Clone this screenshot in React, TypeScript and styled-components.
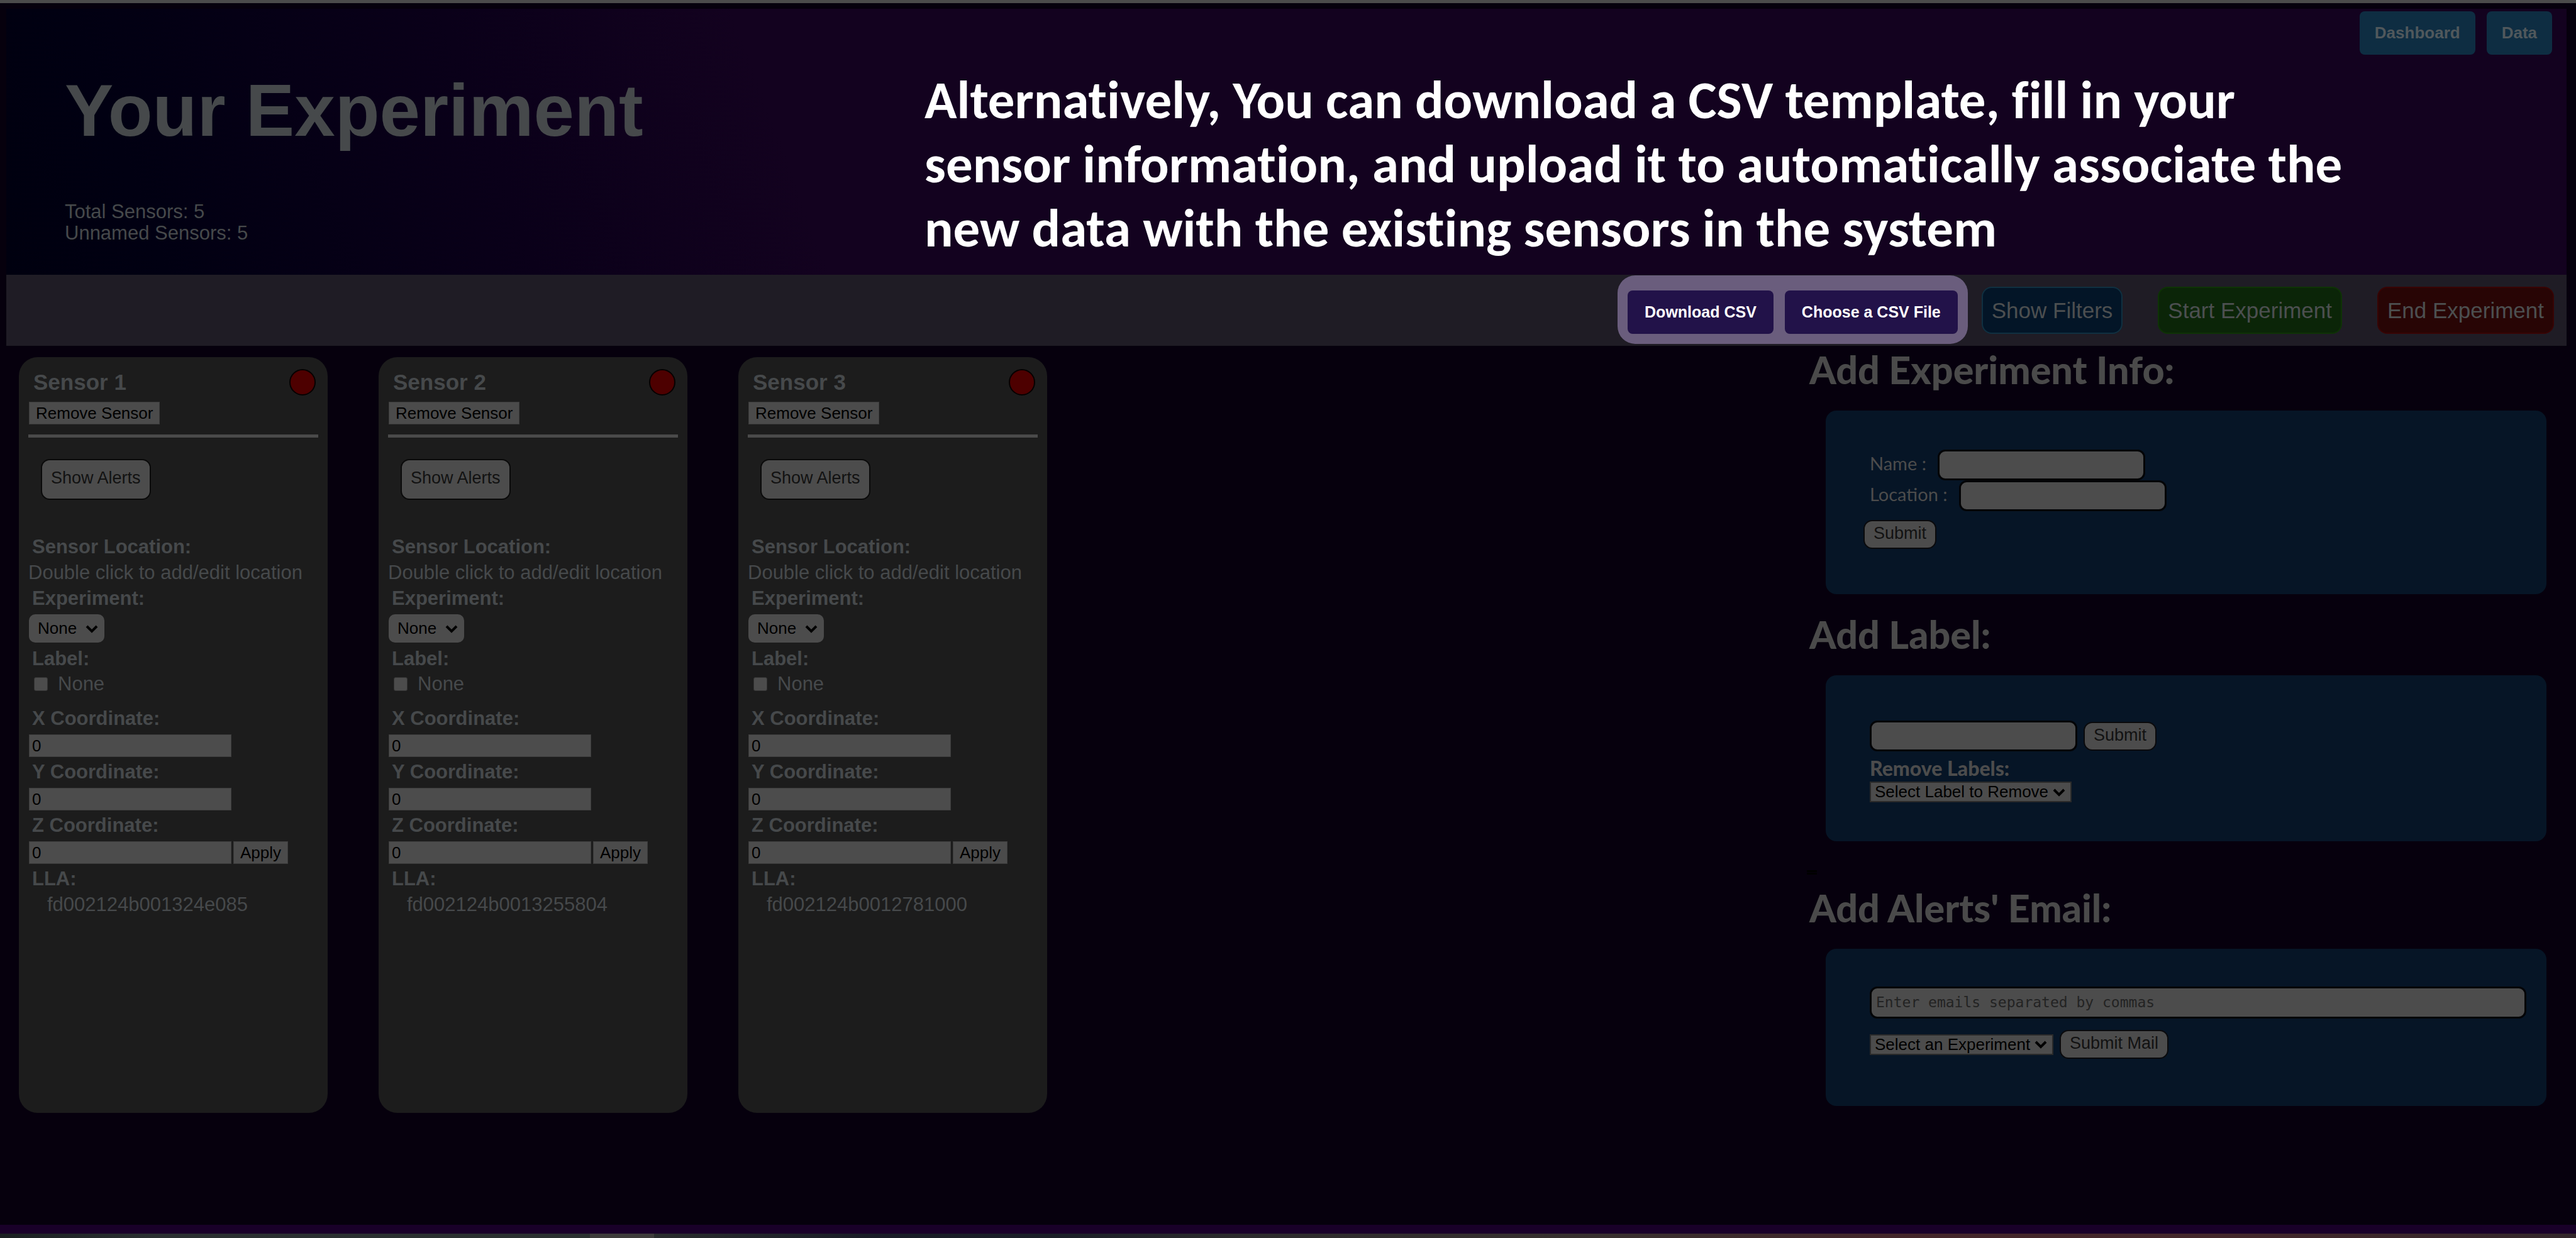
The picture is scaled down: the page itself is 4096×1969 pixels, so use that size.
import React from 'react';
import styled, { createGlobalStyle, css } from 'styled-components';

const sans = '"Liberation Sans", Arial, sans-serif';
const humanist = 'Lato, "Gill Sans", sans-serif';
const paper = '#4c4c4c';
const ink = '#46494b';

const GlobalStyle = createGlobalStyle`
  *, *::before, *::after { box-sizing: border-box; }
  body {
    margin: 0;
    background: #06000d;
    color: ${ink};
    font-family: ${sans};
  }
  button, input, select, textarea { margin: 0; font-family: ${sans}; }
  h1, h2, h3, p { margin: 0; }
`;

const Page = styled.div`
  display: flex;
  flex-direction: column;
  min-height: 100vh;
  border-top: 5px solid #4b4b4b;
`;

const Frame = styled.div`
  flex: 1;
  display: flex;
  flex-direction: column;
  padding: 9px 15px 0 10px;
`;

const Header = styled.header`
  display: flex;
  align-items: flex-start;
  min-height: 423px;
  padding-left: 93px;
  background: linear-gradient(70deg, #00000f 0%, #010012 6%, #0a0019 20%, #13021f 31%);
`;

const Intro = styled.div`
  flex: 0 0 1367px;
  padding-top: 98px;
`;

const Title = styled.h1`
  margin-bottom: 80px;
  font-size: 116px;
  line-height: 128px;
`;

const Count = styled.p`
  font-size: 31px;
  line-height: 34px;
`;

const Caption = styled.p`
  flex: 0 0 2272px;
  padding-top: 94px;
  color: #ffffff;
  font: bold 85px/102px Carlito, Calibri, Lato, sans-serif;
  font-variant-ligatures: none;
`;

const Nav = styled.nav`
  display: flex;
  gap: 18px;
  margin-left: auto;
  padding: 4px 23px 0 0;
`;

const NavButton = styled.button`
  height: 69px;
  padding: 0 24px;
  border: 0;
  border-radius: 8px;
  background: #0e2d42;
  color: #50585c;
  font-size: 26px;
  font-weight: bold;
`;

const Toolbar = styled.div`
  display: flex;
  justify-content: flex-end;
  align-items: flex-end;
  height: 113px;
  padding: 0 20px 19px 0;
  background: #1f1c25;
`;

const Spotlight = styled.div`
  display: flex;
  gap: 18px;
  margin: 0 22px -16px 0;
  padding: 24px 16px 16px;
  border-radius: 28px;
  background: #6a5d7d;
`;

const CsvButton = styled.button`
  height: 69px;
  padding: 0 27px;
  border: 0;
  border-radius: 8px;
  background: #221249;
  color: #ffffff;
  font-size: 25px;
  font-weight: bold;
`;

const Actions = styled.div`
  display: flex;
  gap: 56px;
`;

const ActionButton = styled.button<{ $fill: string; $edge: string }>`
  height: 75px;
  padding: 0 14px;
  border: 2px solid ${p => p.$edge};
  border-radius: 16px;
  background: ${p => p.$fill};
  color: #4c4f50;
  font-size: 35px;
`;

const Main = styled.main`
  flex: 1;
  display: flex;
  align-items: flex-start;
  justify-content: space-between;
  padding: 0 32px 0 20px;
`;

const Cards = styled.div`
  display: flex;
  gap: 81px;
  padding-top: 18px;
`;

const Card = styled.article`
  width: 491px;
  min-height: 1202px;
  padding: 19px 15px;
  border-radius: 30px;
  background: #1c1c1c;
`;

const CardHead = styled.div`
  display: flex;
  justify-content: space-between;
  margin-bottom: 10px;
  padding: 0 4px 0 8px;
`;

const CardTitle = styled.h2`
  font-size: 35px;
  line-height: 42px;
`;

const StatusDot = styled.span`
  width: 42px;
  height: 42px;
  border: 2px solid #060000;
  border-radius: 50%;
  background: #4d0000;
`;

const FlatButton = styled.button`
  height: 36px;
  padding: 0 10px;
  border: 1px solid #3c3c3c;
  background: #4b4b4b;
  color: #000000;
  font-size: 26px;
  line-height: 32px;
`;

const RemoveRow = styled.div`
  display: flex;
  padding-left: 1px;
`;

const Rule = styled.hr`
  height: 5px;
  margin: 16px 0 34px;
  border: 0;
  background: #4a4a4a;
`;

const AlertsButton = styled.button`
  display: block;
  height: 65px;
  margin: 0 0 57px 20px;
  padding: 0 14px 4px;
  border: 2px solid #0a0a0a;
  border-radius: 14px;
  background: ${paper};
  color: #121212;
  font-size: 27px;
`;

const fieldName = css`
  display: block;
  padding-left: 6px;
  font-size: 31px;
  font-weight: bold;
  line-height: 36px;
`;

const FieldName = styled.label`
  ${fieldName}
`;

const FieldHeading = styled.h3`
  ${fieldName}
`;

const FieldText = styled.p<{ $indent?: boolean }>`
  padding: 5px 0 5px ${p => (p.$indent ? 30 : 0)}px;
  font-size: 31px;
  line-height: 36px;
`;

const SelectBox = styled.span<{ $rounded?: boolean }>`
  display: grid;
  align-items: center;
  width: max-content;
  margin: ${p => (p.$rounded ? '7px 0 8px 1px' : '0')};

  select {
    grid-area: 1 / 1;
    appearance: none;
    height: ${p => (p.$rounded ? 45 : 33)}px;
    padding: ${p => (p.$rounded ? '0 43px 0 14px' : '0 34px 0 6px')};
    border: ${p => (p.$rounded ? '0' : '2px solid #2a2a2a')};
    border-radius: ${p => (p.$rounded ? 10 : 0)}px;
    background: ${paper};
    color: #000000;
    font-size: 26px;
    line-height: 29px;
  }

  svg {
    grid-area: 1 / 1;
    justify-self: end;
    width: 20px;
    height: 14px;
    margin-right: 10px;
    pointer-events: none;
  }
`;

const CheckRow = styled.label`
  display: flex;
  align-items: center;
  gap: 16px;
  margin: 4px 0 19px;
  padding-left: 9px;
  font-size: 31px;
  line-height: 36px;
`;

const Check = styled.input`
  appearance: none;
  width: 22px;
  height: 22px;
  border: 1px solid #333333;
  border-radius: 3px;
  background: ${paper};
`;

const CoordRow = styled.div`
  display: flex;
  gap: 3px;
  margin: 7px 0 6px 1px;
`;

const CoordInput = styled.input`
  width: 322px;
  height: 36px;
  padding: 0 4px;
  border: 1px solid #3c3c3c;
  background: ${paper};
  color: #000000;
  font-size: 26px;
`;

const Side = styled.aside`
  display: flex;
  flex-direction: column;
  flex: 0 0 1176px;
  padding-top: 3px;
`;

const SideTitle = styled.h2`
  padding-left: 4px;
  color: #4a4a4a;
  font: 900 61px/70px ${humanist};
`;

const Panel = styled.form<{ $height: number; $top: number }>`
  min-height: ${p => p.$height}px;
  margin: 30px 0 29px 30px;
  padding: ${p => p.$top}px 32px 0 60px;
  border-radius: 17px;
  background: #061526;
`;

const PanelRow = styled.div<{ $gap?: number }>`
  display: flex;
  align-items: center;
  gap: ${p => p.$gap ?? 10}px;
  padding-left: 10px;
`;

const PanelLabel = styled.label<{ $strong?: boolean }>`
  color: #4c4c4c;
  font-family: ${humanist};
  font-size: ${p => (p.$strong ? 32 : 29)}px;
  font-weight: ${p => (p.$strong ? 900 : 400)};
  line-height: 36px;
  padding: ${p => (p.$strong ? '9px 0 3px' : '0 0 6px')};
`;

const RoundInput = styled.input`
  width: 330px;
  height: 49px;
  padding: 0 8px;
  border: 3px solid #030406;
  border-radius: 12px;
  background: ${paper};
  color: #000000;
  font-size: 26px;
`;

const Emails = styled.textarea`
  flex: 1;
  height: 51px;
  margin-bottom: 18px;
  padding: 9px 7px;
  border: 3px solid #030406;
  border-radius: 12px;
  background: ${paper};
  color: #000000;
  font: 23px/27px "DejaVu Sans Mono", monospace;
  resize: none;
  overflow: hidden;
  &::placeholder { color: #232323; opacity: 1; }
`;

const RoundButton = styled.button<{ $spaced?: boolean }>`
  height: 46px;
  margin-top: ${p => (p.$spaced ? 14 : 0)}px;
  padding: 0 14px 3px;
  border: 2px solid #0a0a0c;
  border-radius: 14px;
  background: ${paper};
  color: #121212;
  font-size: 27px;
`;

const ListMark = styled.span`
  width: 16px;
  height: 7px;
  margin: 17px 0 18px;
  border: solid #000000;
  border-width: 3px 0;
`;

const Footer = styled.footer`
  height: 21px;
  border-top: 14px solid #190029;
  background: linear-gradient(90deg,
    #1b2022 0%, #2b3032 6%, #2b3131 22.9%, #3e3c3b 22.9%, #3e3c3b 25.4%,
    #2a2d2e 25.4%, #191c27 34%, #1b1f28 41%, #2c2b2d 48%, #38302f 62%,
    #44262a 74%, #44282b 86%, #33272b 100%);
`;

const Chevron = () => (
  <svg viewBox="0 0 20 14" fill="none" stroke="#000000" strokeWidth="4" aria-hidden="true">
    <path d="M2 3 L10 11 L18 3" />
  </svg>
);

const sensors = [
  { id: 1, lla: 'fd002124b001324e085' },
  { id: 2, lla: 'fd002124b0013255804' },
  { id: 3, lla: 'fd002124b0012781000' },
];

const axes = ['X', 'Y', 'Z'];

const SensorCard = ({ id, lla }: { id: number; lla: string }) => (
  <Card>
    <CardHead>
      <CardTitle>Sensor {id}</CardTitle>
      <StatusDot />
    </CardHead>
    <RemoveRow>
      <FlatButton type="button">Remove Sensor</FlatButton>
    </RemoveRow>
    <Rule />
    <AlertsButton type="button">Show Alerts</AlertsButton>
    <FieldHeading>Sensor Location:</FieldHeading>
    <FieldText>Double click to add/edit location</FieldText>
    <FieldName htmlFor={`experiment-${id}`}>Experiment:</FieldName>
    <SelectBox $rounded>
      <select id={`experiment-${id}`}>
        <option>None</option>
      </select>
      <Chevron />
    </SelectBox>
    <FieldHeading>Label:</FieldHeading>
    <CheckRow>
      <Check type="checkbox" />
      None
    </CheckRow>
    {axes.map(axis => (
      <React.Fragment key={axis}>
        <FieldName htmlFor={`${axis}-${id}`}>{axis} Coordinate:</FieldName>
        <CoordRow>
          <CoordInput id={`${axis}-${id}`} type="text" defaultValue="0" />
          {axis === 'Z' && <FlatButton type="button">Apply</FlatButton>}
        </CoordRow>
      </React.Fragment>
    ))}
    <FieldHeading>LLA:</FieldHeading>
    <FieldText $indent>{lla}</FieldText>
  </Card>
);

export default function App() {
  return (
    <Page>
      <GlobalStyle />
      <Frame>
        <Header>
          <Intro>
            <Title>Your Experiment</Title>
            <Count>Total Sensors: 5</Count>
            <Count>Unnamed Sensors: 5</Count>
          </Intro>
          <Caption>
            Alternatively, You can download a CSV template, fill in your sensor information, and
            upload it to automatically associate the new data with the existing sensors in the system
          </Caption>
          <Nav>
            <NavButton type="button">Dashboard</NavButton>
            <NavButton type="button">Data</NavButton>
          </Nav>
        </Header>
        <Toolbar>
          <Spotlight>
            <CsvButton type="button">Download CSV</CsvButton>
            <CsvButton type="button">Choose a CSV File</CsvButton>
          </Spotlight>
          <Actions>
            <ActionButton type="button" $fill="#031527" $edge="#103041">Show Filters</ActionButton>
            <ActionButton type="button" $fill="#0b2508" $edge="#0e3305">Start Experiment</ActionButton>
            <ActionButton type="button" $fill="#280505" $edge="#380404">End Experiment</ActionButton>
          </Actions>
        </Toolbar>
        <Main>
          <Cards>
            {sensors.map(s => (
              <SensorCard key={s.id} {...s} />
            ))}
          </Cards>
          <Side>
            <SideTitle>Add Experiment Info:</SideTitle>
            <Panel $height={292} $top={62}>
              <PanelRow $gap={18}>
                <PanelLabel htmlFor="info-name">Name :</PanelLabel>
                <RoundInput id="info-name" type="text" />
              </PanelRow>
              <PanelRow $gap={18}>
                <PanelLabel htmlFor="info-location">Location :</PanelLabel>
                <RoundInput id="info-location" type="text" />
              </PanelRow>
              <RoundButton type="button" $spaced>Submit</RoundButton>
            </Panel>
            <SideTitle>Add Label:</SideTitle>
            <Panel $height={264} $top={72}>
              <PanelRow>
                <RoundInput type="text" aria-label="New label" />
                <RoundButton type="button">Submit</RoundButton>
              </PanelRow>
              <PanelRow>
                <PanelLabel $strong htmlFor="remove-label">Remove Labels:</PanelLabel>
              </PanelRow>
              <PanelRow>
                <SelectBox>
                  <select id="remove-label">
                    <option>Select Label to Remove</option>
                  </select>
                  <Chevron />
                </SelectBox>
              </PanelRow>
            </Panel>
            <ListMark />
            <SideTitle>Add Alerts' Email:</SideTitle>
            <Panel $height={250} $top={60}>
              <PanelRow>
                <Emails aria-label="Emails" placeholder="Enter emails separated by commas" />
              </PanelRow>
              <PanelRow>
                <SelectBox>
                  <select aria-label="Experiment">
                    <option>Select an Experiment</option>
                  </select>
                  <Chevron />
                </SelectBox>
                <RoundButton type="button">Submit Mail</RoundButton>
              </PanelRow>
            </Panel>
          </Side>
        </Main>
      </Frame>
      <Footer />
    </Page>
  );
}
